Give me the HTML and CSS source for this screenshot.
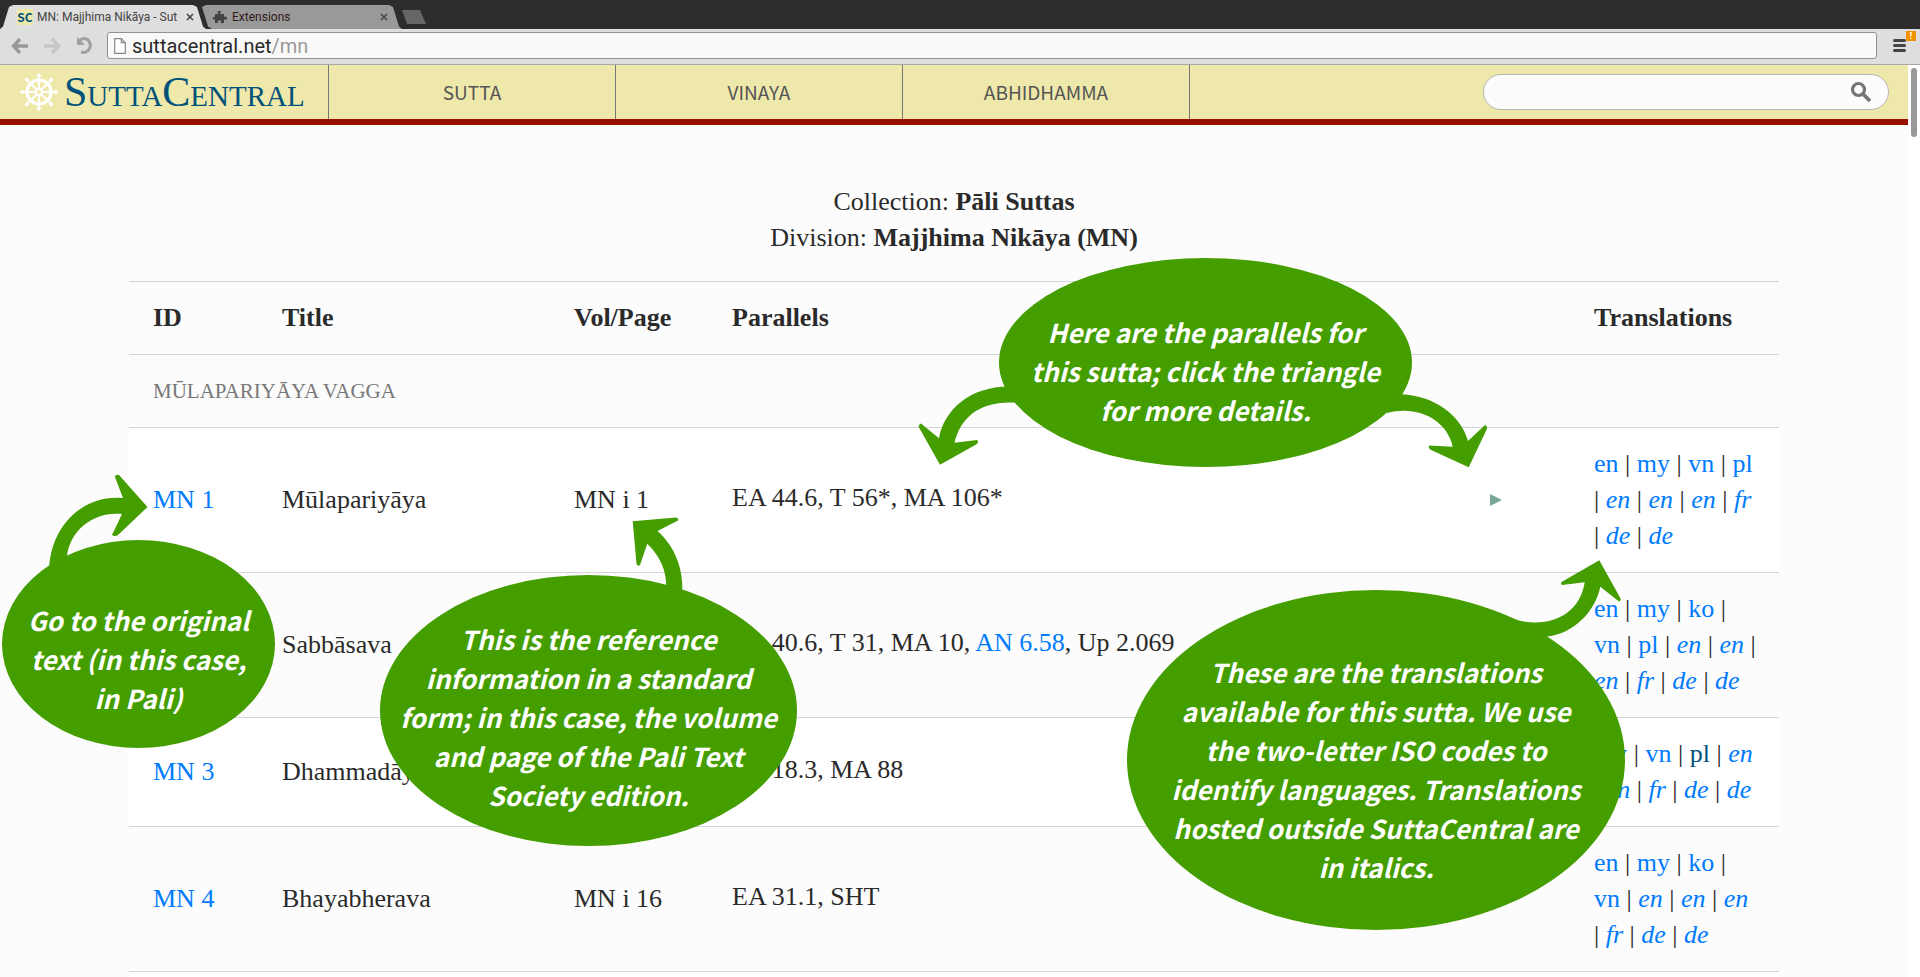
FILE: index.html
```html
<!DOCTYPE html>
<html lang="en">
<head>
<meta charset="utf-8">
<title>MN: Majjhima Nikāya - SuttaCentral</title>
<link rel="stylesheet" href="styles.css">
</head>
<body>
<div class="tabstrip">
  <div class="tab tab-active">
    <span class="favicon">SC</span>
    <span class="tab-title">MN: Majjhima Nikāya - Sut</span>
    <button class="tab-close" aria-label="Close tab"><svg width="8" height="8" viewBox="0 0 8 8"><path d="M1 1l6 6M7 1l-6 6" stroke="#444" stroke-width="1.6"/></svg></button>
  </div>
  <div class="tab tab-idle">
    <svg class="puzzle" width="14" height="14" viewBox="0 0 14 14"><path fill="#444" d="M2 4h3.2C4.2 2.400 4.600.8 6.200.8S8.200 2.400 7.300 4H11v3c1.600-1 3-.4 3 1.200S12.600 10.200 11 9.300V13H7.600c.8-1.600.2-2.800-1.200-2.800S4.400 11.400 5.200 13H2V9.400C.8 10.200 0 9.400 0 8.200S.8 6.200 2 7z"/></svg>
    <span class="tab-title">Extensions</span>
    <button class="tab-close" aria-label="Close tab"><svg width="8" height="8" viewBox="0 0 8 8"><path d="M1 1l6 6M7 1l-6 6" stroke="#444" stroke-width="1.6"/></svg></button>
  </div>
  <button class="tab-new" aria-label="New tab"></button>
</div>
<div class="toolbar">
  <button class="tool" aria-label="Back"><svg width="18" height="18" viewBox="0 0 18 18"><path d="M9 2L2.500 9L9 16M3 9h14" fill="none" stroke="#999" stroke-width="3.400"/></svg></button>
  <button class="tool" aria-label="Forward"><svg width="18" height="18" viewBox="0 0 18 18"><path d="M9 2l6.500 7L9 16M15 9H1" fill="none" stroke="#c6c6c6" stroke-width="3.400"/></svg></button>
  <button class="tool" aria-label="Reload"><svg width="20" height="20" viewBox="0 0 20 20"><path d="M4 4.500Q7 2.500 10.500 2.500a7 7 0 1 1-4.500 13.500" fill="none" stroke="#a0a0a0" stroke-width="3"/><path d="M2 1v8h8z" fill="#a0a0a0"/></svg></button>
  <label class="omnibox">
    <svg width="12" height="16" viewBox="0 0 12 16"><path d="M.7.700h6.600l4 4v10.600H.7zM7.300.700v4h4" fill="#fff" stroke="#888" stroke-width="1.200"/></svg>
    <span class="address"><input class="host" aria-label="Address" value="suttacentral.net"><span class="path">/mn</span></span>
  </label>
  <button class="menu" aria-label="Menu"><svg width="13" height="13" viewBox="0 0 13 13"><path d="M1.500 1.500h10M1.500 6.500h10M1.500 11.500h10" stroke="#444" stroke-width="3" stroke-linecap="round"/></svg><span class="alert">!</span></button>
</div>
<div class="viewport">
  <div class="page">
    <header class="site-header">
      <a class="logo" href="#">
        <svg width="38" height="38" viewBox="-19 -19 38 38" fill="none" stroke="#fff"><circle r="12" stroke-width="3.200"/><circle r="3" stroke-width="2"/><path stroke-width="2" d="M0 3v14M0-3v-14M3 0h14M-3 0h-14M2 2l10 10M-2-2l-10-10M2-2l10-10M-2 2l-10 10"/><path stroke-width="3.600" stroke-linecap="round" d="M0-16v-1M0 16v1M16 0h1M-16 0h-1M12 12l.5.500M-12-12l-.5-.5M12-12l.5-.5M-12 12l-.5.500"/></svg>
        <span>SuttaCentral</span>
      </a>
      <nav class="nav">
        <a href="#">SUTTA</a>
        <a href="#">VINAYA</a>
        <a href="#">ABHIDHAMMA</a>
      </nav>
      <form class="search">
        <input type="text" aria-label="Search">
        <button type="button" aria-label="Search"><svg width="22" height="22" viewBox="0 0 22 22" fill="none" stroke="#757575"><circle cx="8.500" cy="8.500" r="6" stroke-width="3.200"/><path d="M13 13l7 7" stroke-width="3.800"/></svg></button>
      </form>
    </header>
    <main class="content">
      <p class="intro">Collection: <strong>Pāli Suttas</strong><br>Division: <strong>Majjhima Nikāya (MN)</strong></p>
      <table class="suttas">
        <colgroup><col class="c-id"><col class="c-title"><col class="c-vol"><col><col class="c-more"><col class="c-trans"></colgroup>
        <thead>
          <tr><th>ID</th><th>Title</th><th>Vol/Page</th><th>Parallels</th><th></th><th>Translations</th></tr>
        </thead>
        <tbody>
          <tr><td class="vagga" colspan="6">MŪLAPARIYĀYA VAGGA</td></tr>
          <tr class="odd"><td><a href="#">MN 1</a></td><td>Mūlapariyāya</td><td>MN i 1</td><td class="par">EA 44.6, T 56*, MA 106*</td><td><button class="more" aria-label="Show details"></button></td>
            <td><a href="#">en</a> | <a href="#">my</a> | <a href="#">vn</a> | <a href="#">pl</a><br>| <a href="#"><i>en</i></a> | <a href="#"><i>en</i></a> | <a href="#"><i>en</i></a> | <a href="#"><i>fr</i></a><br>| <a href="#"><i>de</i></a> | <a href="#"><i>de</i></a></td></tr>
          <tr><td></td><td>Sabbāsava</td><td></td><td class="par">EA 40.6, T 31, MA 10, <a href="#">AN 6.58</a>, Up 2.069</td><td></td>
            <td><a href="#">en</a> | <a href="#">my</a> | <a href="#">ko</a> |<br><a href="#">vn</a> | <a href="#">pl</a> | <a href="#"><i>en</i></a> | <a href="#"><i>en</i></a> |<br><a href="#"><i>en</i></a> | <a href="#"><i>fr</i></a> | <a href="#"><i>de</i></a> | <a href="#"><i>de</i></a></td></tr>
          <tr class="odd"><td><a href="#">MN 3</a></td><td>Dhammadāyāda</td><td></td><td class="par">EA 18.3, MA 88</td><td></td>
            <td><a href="#">my</a> | <a href="#">vn</a> | <a class="seen" href="#">pl</a> | <a href="#"><i>en</i></a><br>| <a href="#"><i>en</i></a> | <a href="#"><i>fr</i></a> | <a href="#"><i>de</i></a> | <a href="#"><i>de</i></a></td></tr>
          <tr><td><a href="#">MN 4</a></td><td>Bhayabherava</td><td>MN i 16</td><td class="par">EA 31.1, SHT</td><td></td>
            <td><a href="#">en</a> | <a href="#">my</a> | <a href="#">ko</a> |<br><a href="#">vn</a> | <a href="#"><i>en</i></a> | <a href="#"><i>en</i></a> | <a href="#"><i>en</i></a><br>| <a href="#"><i>fr</i></a> | <a href="#"><i>de</i></a> | <a href="#"><i>de</i></a></td></tr>
          <tr class="odd"><td colspan="6"></td></tr>
        </tbody>
      </table>
    </main>
  </div>
  <div class="scrollbar"><div class="thumb"></div></div>
</div>
<div class="notes">
  <svg class="arrows" width="100%" height="100%" fill="#459e00">
    <path d="M49 575C48 528 82 494 123 498L115 477Q115 474 119 475L147.500 507L118 535Q115 537 112 535L122 514C94 511 70 530 67 556V575z"/>
    <path d="M632.700 521.300L676 517.500Q679 518 678 520.500L657.500 531C674 546 683 566 682.400 592H666.500C667 570 660 556 647.300 543.700L640 565Q638 567 636.500 564z"/>
    <path d="M1010 386.500C970 386 944 410 939 438.300L921 423.500Q919 424 918.600 426.700L940 464.700L977 444Q979 441 977 440L954.500 442.700C961 416 982 399 1020 403z"/>
    <path d="M1385 396Q1395 393.500 1402 394.300C1434 396 1461 415 1468 441L1485 425Q1487.500 426 1487 428.700L1468.700 467.300L1430 449.500Q1428 447 1429 445.500L1452.700 446.700C1447 420 1418 405 1387 413z"/>
    <path d="M1599.300 560.300L1620.700 598.700Q1621 601 1619 601.500L1600.300 586.700C1595 612 1574 633 1547.300 636.700L1500 640V614L1516.700 620C1550 629 1580 614 1584.700 582.300L1562 585Q1560 583 1562 581.700z"/>
  </svg>
  <p class="note note-id">Go to the original<br>text (in this case,<br>in Pali)</p>
  <p class="note note-vol">This is the reference<br>information in a standard<br>form; in this case, the volume<br>and page of the Pali Text<br>Society edition.</p>
  <p class="note note-par">Here are the parallels for<br>this sutta; click the triangle<br>for more details.</p>
  <p class="note note-trans">These are the translations<br>available for this sutta. We use<br>the two-letter ISO codes to<br>identify languages. Translations<br>hosted outside SuttaCentral are<br>in italics.</p>
</div>
</body>
</html>
```
FILE: styles.css
```css
* { box-sizing: border-box; }
body {
  margin: 0;
  height: 100vh;
  display: flex;
  flex-direction: column;
  overflow: hidden;
  position: relative;
  background: #fff;
  color: #2a2a2a;
  font-family: "Liberation Serif", serif;
}
button { border: 0; padding: 0; background: none; font: inherit; display: block; }
button svg { display: block; }
a { color: #007bff; text-decoration: none; }

/* browser chrome */
.tabstrip {
  display: flex;
  align-items: flex-end;
  flex: none;
  height: 29px;
  background: #2d2d2d;
  font: 12px Roboto, sans-serif;
}
.tab {
  display: flex;
  align-items: center;
  gap: 4px;
  height: 24px;
  padding: 0 12px 0 17px;
  width: 206px;
  color: #444;
}
.tab-active {
  background: #dedede;
  clip-path: polygon(0 100%, 3px 90%, 9px 8%, 13px 0, 193px 0, 197px 8%, 203px 90%, 100% 100%);
}
.tab-idle {
  width: 200px;
  margin-left: -4px;
  padding: 0 14px 0 11px;
  background: #999;
  color: #301818;
  clip-path: polygon(0 8%, 4px 0, 187px 0, 191px 8%, 197px 90%, 100% 100%, 10px 100%, 6px 90%);
}
.tab-title { flex: 1; white-space: nowrap; overflow: hidden; }
.puzzle { margin-right: 1px; }
.favicon {
  flex: none;
  width: 16px;
  height: 16px;
  background: #eee8aa;
  color: #00527a;
  font: bold 12px/16px "Noto Sans CJK SC", sans-serif;
  text-align: center;
}
.tab-new {
  width: 24px;
  height: 14px;
  margin-bottom: 5px;
  background: #666;
  clip-path: polygon(0 0, 18px 0, 24px 100%, 5px 100%);
}
.toolbar {
  display: flex;
  align-items: center;
  flex: none;
  height: 36px;
  padding: 0 0 2px 11px;
  background: #dedede;
  border-bottom: 1px solid #a8a8a8;
}
.tool { width: 20px; margin-right: 12px; }
.omnibox {
  flex: 1;
  display: flex;
  align-items: center;
  gap: 6px;
  height: 27px;
  margin-right: 16px;
  padding: 0 6px;
  background: #f9f9f9;
  border: 1px solid #929292;
  border-radius: 3px;
  font: 20px Roboto, sans-serif;
}
.address { display: flex; align-items: center; }
.host { field-sizing: content; border: 0; padding: 0; background: none; font: inherit; color: #2a2a2a; outline: 0; }
.path { color: #999; }
.menu { position: relative; width: 27px; height: 13px; }
.alert {
  position: absolute;
  left: 13px;
  top: -8px;
  width: 10px;
  height: 10px;
  background: #f39200;
  color: #fff;
  font: bold 9px/10px Roboto, sans-serif;
  text-align: center;
}

/* site */
.viewport { flex: 1; min-height: 0; display: flex; }
.page { flex: 1; background: #fcfcfc; overflow: hidden; }
.scrollbar { width: 12px; padding: 3px; background: #fff; }
.thumb { height: 69px; border-radius: 3px; background: #999; }
.site-header {
  display: flex;
  align-items: center;
  height: 60px;
  background: #eee8aa;
  border-bottom: 6px solid #990f00;
}
.logo {
  display: flex;
  align-items: center;
  gap: 6px;
  width: 328px;
  padding-left: 20px;
  color: #00527a;
  font-size: 42px;
  line-height: 54px;
  font-variant: small-caps;
}
.nav { display: flex; align-self: stretch; flex: 1; border-left: 1px solid #777; }
.nav a {
  width: 287px;
  border-right: 1px solid #777;
  color: #555;
  font: 19px/54px "Noto Sans CJK SC", sans-serif;
  text-align: center;
}
.search {
  display: flex;
  align-items: center;
  width: 406px;
  height: 36px;
  margin-right: 19px;
  padding: 0 16px 0 20px;
  background: #fcfcfc;
  border: 1px solid #b5b5b5;
  border-radius: 18px;
}
.search input { flex: 1; border: 0; background: none; outline: 0; }
.content { padding: 59px 129px 0; font-size: 26px; line-height: 36px; }
.intro { margin: 0 0 25px; text-align: center; }
.suttas { width: 100%; table-layout: fixed; border-collapse: separate; border-spacing: 0; }
.c-id { width: 129px; }
.c-title { width: 292px; }
.c-vol { width: 158px; }
.c-more { width: 104px; }
.c-trans { width: 209px; }
th, td {
  padding: 18px 0 18px 24px;
  border-top: 1px solid #d4d4d4;
  text-align: left;
  vertical-align: middle;
  white-space: nowrap;
}
.par { padding-bottom: 22px; }
.vagga { font-size: 21px; color: #777; }
.odd td { background: #fff; }
.seen { color: #00527a; }
.more { width: 12px; height: 12px; background: #76a698; clip-path: polygon(0 0, 100% 50%, 0 100%); }

/* callouts */
.notes { position: absolute; inset: 0; pointer-events: none; }
.arrows { position: absolute; inset: 0; }
.note {
  position: absolute;
  display: flex;
  align-items: center;
  justify-content: center;
  margin: 0;
  border-radius: 50%;
  background: #459e00;
  color: #fff;
  font: italic bold 26px/39px "Noto Sans CJK SC", sans-serif;
  text-align: center;
  white-space: nowrap;
}
.note-id { left: 2px; top: 540px; width: 273px; height: 208px; padding-top: 28px; }
.note-vol { left: 380px; top: 575px; width: 417px; height: 271px; padding-top: 12px; }
.note-par { left: 999px; top: 258px; width: 413px; height: 209px; padding-top: 16px; }
.note-trans { left: 1127px; top: 590px; width: 498px; height: 340px; padding-top: 18px; }
```
